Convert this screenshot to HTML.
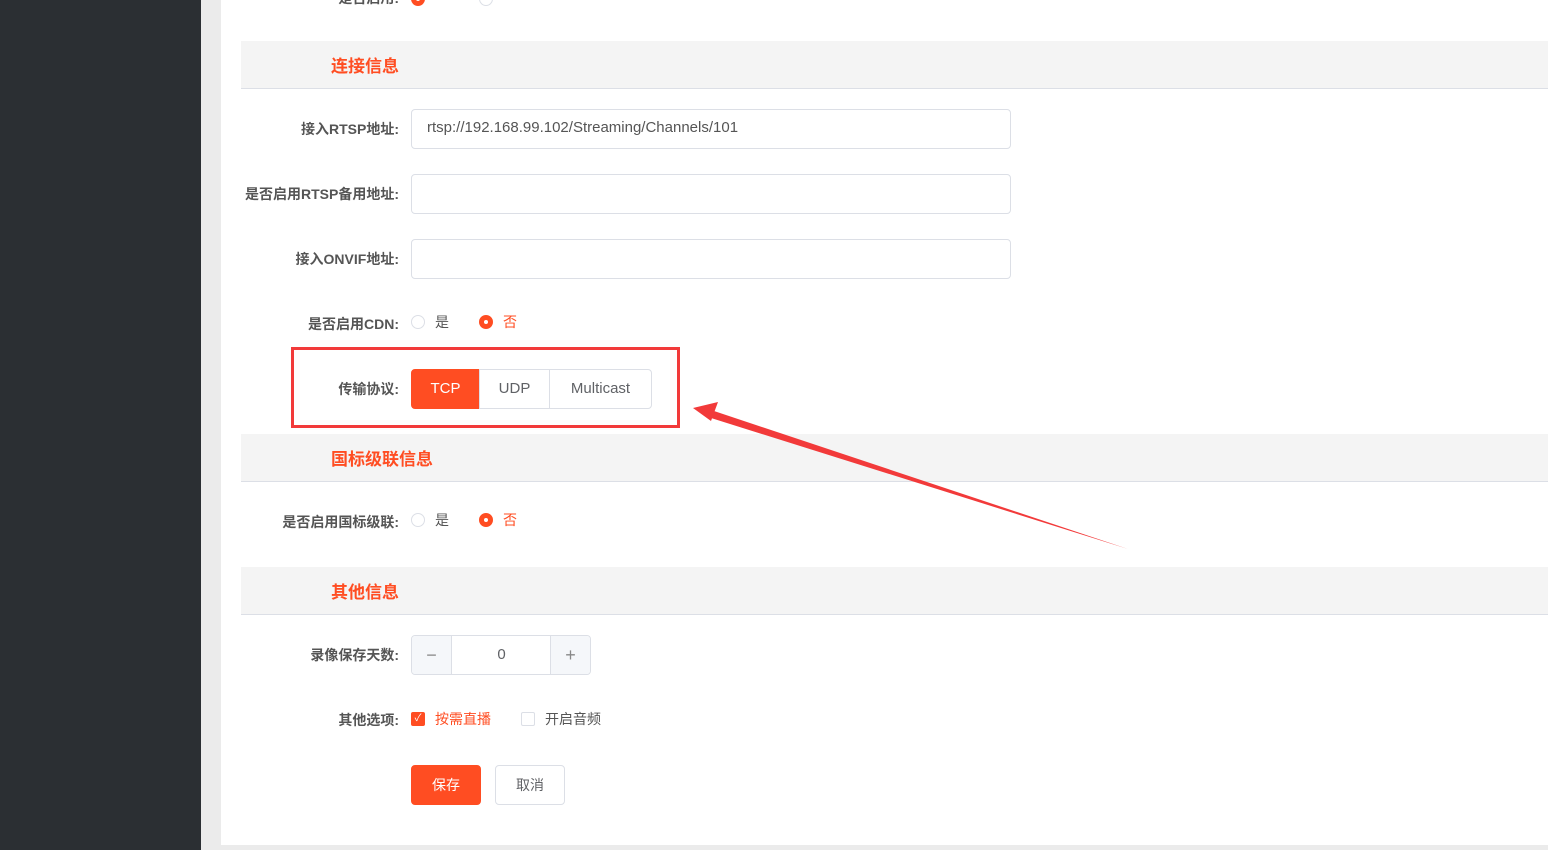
<!DOCTYPE html>
<html><head><meta charset="utf-8"><style>
*{box-sizing:border-box;margin:0;padding:0}
body{width:1548px;height:850px;overflow:hidden;background:#ebebeb;font-family:"Liberation Sans","Noto Sans CJK SC",sans-serif;position:relative;color:#606266}
.side{position:absolute;left:0;top:0;width:201px;height:850px;background:#2b2f33}
.card{position:absolute;left:221px;top:0;width:1327px;height:845px;background:#fff}
.band{position:absolute;left:241px;width:1307px;height:48px;background:#f4f4f4;border-bottom:1px solid #dcdfe6}
.band span{position:absolute;left:90px;top:11px;font-size:17px;color:#ff4d22;font-weight:bold}
.lbl{position:absolute;right:1149px;font-size:14px;font-weight:bold;color:#555;white-space:nowrap}
.inp{position:absolute;left:411px;width:600px;height:40px;border:1px solid #dcdfe6;border-radius:4px;font-size:15px;color:#555;padding:9px 15px}
.radio{position:absolute;width:14px;height:14px;border-radius:50%;border:1px solid #dcdfe6}
.radio.on{background:#ff4d22;border-color:#ff4d22}
.radio.on:after{content:"";position:absolute;left:4px;top:4px;width:4px;height:4px;border-radius:50%;background:#fff}
.t{position:absolute;font-size:14px;color:#555}
.btn{position:absolute;height:40px;font-size:15px;text-align:center;line-height:38px;border:1px solid #dcdfe6;color:#606266}
</style></head><body>
<div class="side"></div>
<div class="card"></div>
<div class="lbl" style="top:-12px">是否启用:</div>
<div class="radio on" style="left:411px;top:-8px"></div>
<div class="radio" style="left:479px;top:-8px"></div>
<div class="band" style="top:41px"><span>连接信息</span></div>
<div class="lbl" style="top:119px">接入RTSP地址:</div>
<div class="inp" style="top:109px">rtsp://192.168.99.102/Streaming/Channels/101</div>
<div class="lbl" style="top:184px">是否启用RTSP备用地址:</div>
<div class="inp" style="top:174px"></div>
<div class="lbl" style="top:249px">接入ONVIF地址:</div>
<div class="inp" style="top:239px"></div>
<div class="lbl" style="top:314px">是否启用CDN:</div>
<div class="radio" style="left:411px;top:315px"></div><div class="t" style="left:435px;top:312px">是</div>
<div class="radio on" style="left:479px;top:315px"></div><div class="t" style="left:503px;top:312px;color:#ff4d22">否</div>
<div class="lbl" style="top:379px">传输协议:</div>
<div class="btn" style="left:411px;top:369px;width:69px;background:#ff4d22;border-color:#ff4d22;color:#fff;border-radius:4px 0 0 4px">TCP</div>
<div class="btn" style="left:479px;top:369px;width:71px">UDP</div>
<div class="btn" style="left:549px;top:369px;width:103px;border-radius:0 4px 4px 0">Multicast</div>
<div style="position:absolute;left:291px;top:347px;width:389px;height:81px;border:3px solid #f23a3a"></div>
<div class="band" style="top:434px"><span>国标级联信息</span></div>
<div class="lbl" style="top:512px">是否启用国标级联:</div>
<div class="radio" style="left:411px;top:513px"></div><div class="t" style="left:435px;top:510px">是</div>
<div class="radio on" style="left:479px;top:513px"></div><div class="t" style="left:503px;top:510px;color:#ff4d22">否</div>
<div class="band" style="top:567px"><span>其他信息</span></div>
<div class="lbl" style="top:645px">录像保存天数:</div>
<div style="position:absolute;left:411px;top:635px;width:180px;height:40px;border:1px solid #dcdfe6;border-radius:4px;overflow:hidden">
<div style="position:absolute;left:0;top:0;width:40px;height:38px;background:#f5f7fa;border-right:1px solid #dcdfe6;text-align:center;line-height:38px;font-size:18px;color:#888">−</div>
<div style="position:absolute;left:40px;top:0;width:99px;height:38px;text-align:center;line-height:38px;font-size:15px">0</div>
<div style="position:absolute;right:0;top:0;width:40px;height:38px;background:#f5f7fa;border-left:1px solid #dcdfe6;text-align:center;line-height:38px;font-size:18px;color:#888">+</div></div>
<div class="lbl" style="top:710px">其他选项:</div>
<div style="position:absolute;left:411px;top:712px;width:14px;height:14px;background:#ff4d22;border-radius:2px;color:#fff;font-size:10px;line-height:14px;text-align:center">✓</div>
<div class="t" style="left:435px;top:709px;color:#ff4d22">按需直播</div>
<div style="position:absolute;left:521px;top:712px;width:14px;height:14px;border:1px solid #dcdfe6;border-radius:2px"></div>
<div class="t" style="left:545px;top:709px">开启音频</div>
<div class="btn" style="left:411px;top:765px;width:70px;background:#ff4d22;border-color:#ff4d22;color:#fff;border-radius:4px;font-size:14px">保存</div>
<div class="btn" style="left:495px;top:765px;width:70px;border-radius:4px;font-size:14px">取消</div>
<svg style="position:absolute;left:0;top:0" width="1548" height="850">
<polygon points="1128,549 714,411 711,418" fill="#f23a3a"/>
<polygon points="693,408 718,402 711,421" fill="#f23a3a"/>
</svg>
</body></html>
